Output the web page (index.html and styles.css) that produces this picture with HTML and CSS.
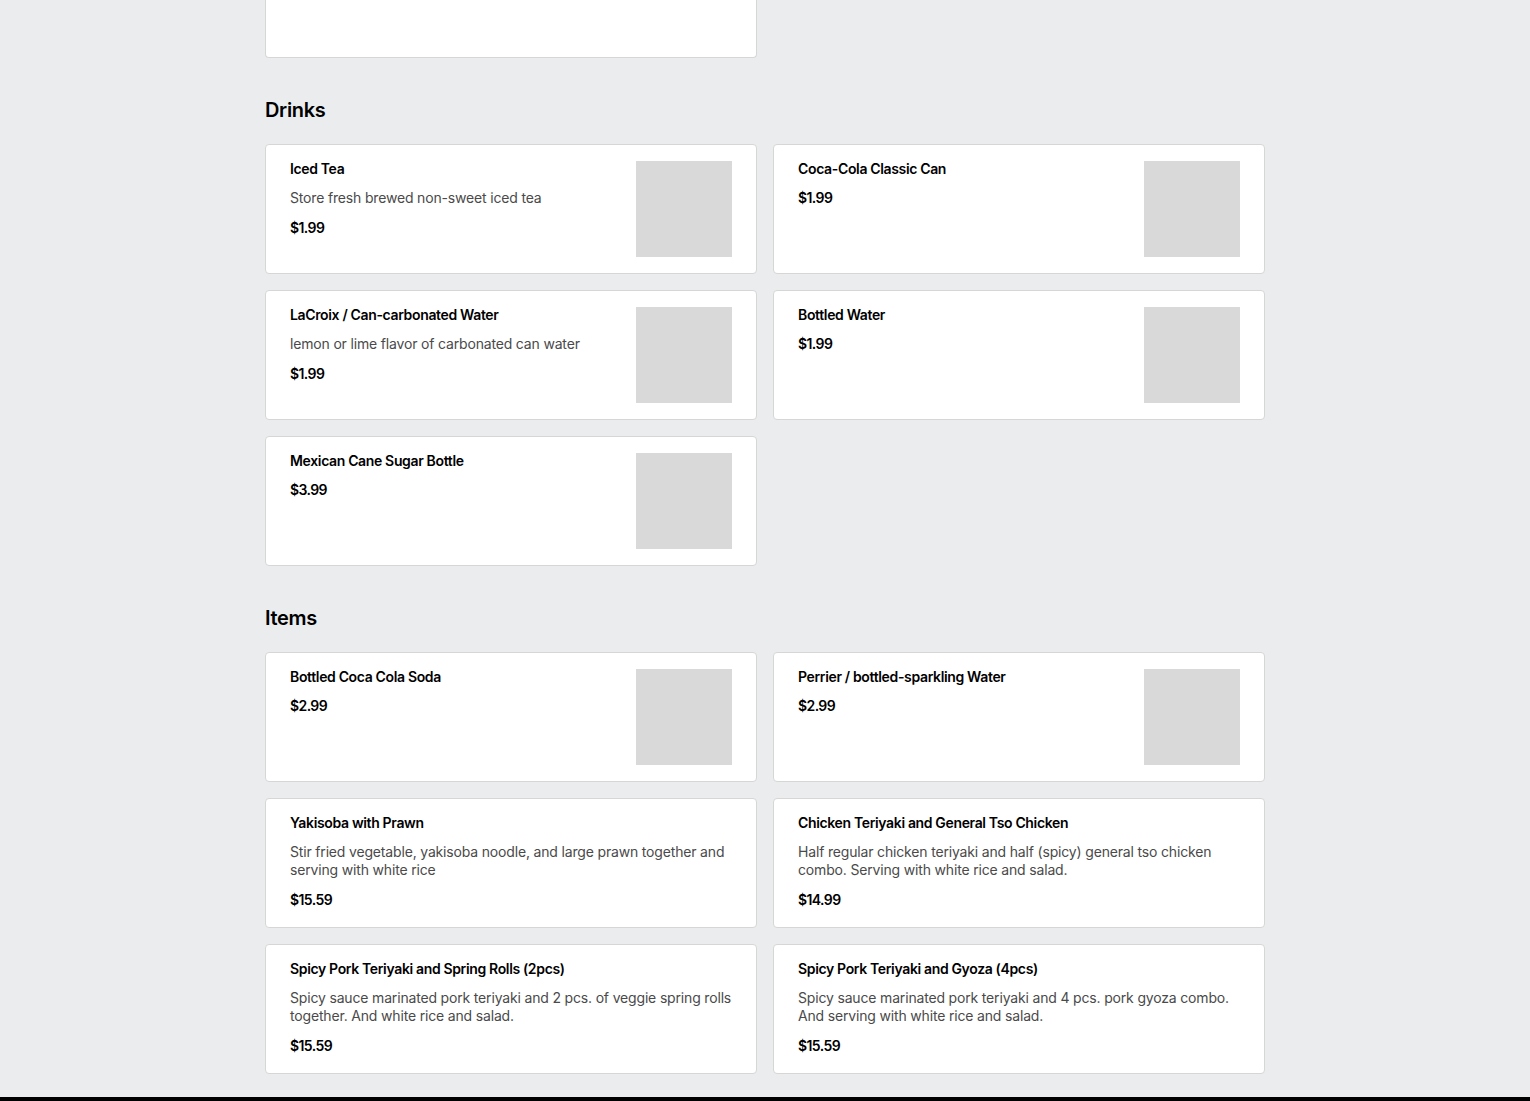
FILE: index.html
```html
<!DOCTYPE html>
<html lang="en">
<head>
<meta charset="utf-8">
<title>Menu</title>
<link rel="stylesheet" href="styles.css">
</head>
<body>
<main class="menu">
  <div class="grid">
    <div class="card card-cut"></div>
  </div>

  <section class="section">
    <h2 class="section-title">Drinks</h2>
    <div class="grid">
      <div class="card">
        <div class="info">
          <div class="name">Iced Tea</div>
          <div class="desc">Store fresh brewed non-sweet iced tea</div>
          <div class="price">$1.99</div>
        </div>
        <div class="thumb"></div>
      </div>
      <div class="card">
        <div class="info">
          <div class="name">Coca-Cola Classic Can</div>
          <div class="price">$1.99</div>
        </div>
        <div class="thumb"></div>
      </div>
      <div class="card">
        <div class="info">
          <div class="name">LaCroix / Can-carbonated Water</div>
          <div class="desc">lemon or lime flavor of carbonated can water</div>
          <div class="price">$1.99</div>
        </div>
        <div class="thumb"></div>
      </div>
      <div class="card">
        <div class="info">
          <div class="name">Bottled Water</div>
          <div class="price">$1.99</div>
        </div>
        <div class="thumb"></div>
      </div>
      <div class="card">
        <div class="info">
          <div class="name">Mexican Cane Sugar Bottle</div>
          <div class="price">$3.99</div>
        </div>
        <div class="thumb"></div>
      </div>
    </div>
  </section>

  <section class="section">
    <h2 class="section-title">Items</h2>
    <div class="grid">
      <div class="card">
        <div class="info">
          <div class="name">Bottled Coca Cola Soda</div>
          <div class="price">$2.99</div>
        </div>
        <div class="thumb"></div>
      </div>
      <div class="card">
        <div class="info">
          <div class="name">Perrier / bottled-sparkling Water</div>
          <div class="price">$2.99</div>
        </div>
        <div class="thumb"></div>
      </div>
      <div class="card">
        <div class="info">
          <div class="name">Yakisoba with Prawn</div>
          <div class="desc">Stir fried vegetable, yakisoba noodle, and large prawn together and serving with white rice</div>
          <div class="price">$15.59</div>
        </div>
      </div>
      <div class="card">
        <div class="info">
          <div class="name">Chicken Teriyaki and General Tso Chicken</div>
          <div class="desc">Half regular chicken teriyaki and half (spicy) general tso chicken combo. Serving with white rice and salad.</div>
          <div class="price">$14.99</div>
        </div>
      </div>
      <div class="card">
        <div class="info">
          <div class="name">Spicy Pork Teriyaki and Spring Rolls (2pcs)</div>
          <div class="desc">Spicy sauce marinated pork teriyaki and 2 pcs. of veggie spring rolls together. And white rice and salad.</div>
          <div class="price">$15.59</div>
        </div>
      </div>
      <div class="card">
        <div class="info">
          <div class="name">Spicy Pork Teriyaki and Gyoza (4pcs)</div>
          <div class="desc">Spicy sauce marinated pork teriyaki and 4 pcs. pork gyoza combo. And serving with white rice and salad.</div>
          <div class="price">$15.59</div>
        </div>
      </div>
    </div>
  </section>
</main>
<footer class="footer"></footer>
</body>
</html>
```

FILE: styles.css
```css
html, body {
  margin: 0;
  padding: 0;
}
body {
  background: #ebecee;
  font-family: Inter, "Noto Sans", "Liberation Sans", sans-serif;
  color: #000;
}
.menu {
  width: 1000px;
  margin: 0 auto;
  padding-bottom: 23px;
}
.grid {
  display: grid;
  grid-template-columns: 492px 492px;
  column-gap: 16px;
  row-gap: 16px;
}
.card {
  box-sizing: border-box;
  height: 130px;
  background: #fff;
  border: 1px solid #d6d6d6;
  border-radius: 4px;
  padding: 16px 24px;
  display: flex;
  gap: 16px;
}
.card-cut {
  height: 58px;
  border-top: none;
  border-radius: 0 0 4px 4px;
}
.info {
  flex: 1;
  min-width: 0;
}
.name {
  font-size: 14px;
  line-height: 16px;
  font-weight: 600;
  letter-spacing: -0.35px;
  margin-bottom: 12px;
}
.desc {
  font-size: 14px;
  line-height: 18px;
  color: #4a4a4a;
  letter-spacing: -0.17px;
  margin-bottom: 12px;
}
.price {
  font-size: 14px;
  line-height: 18px;
  font-weight: 600;
  letter-spacing: -0.6px;
}
.thumb {
  width: 96px;
  height: 96px;
  flex: none;
  background: #d9d9d9;
}
.section-title {
  margin: 38px 0 20px;
  font-size: 20px;
  line-height: 28px;
  font-weight: 600;
  letter-spacing: -0.35px;
}
.footer {
  height: 60px;
  background: #000;
}
```
